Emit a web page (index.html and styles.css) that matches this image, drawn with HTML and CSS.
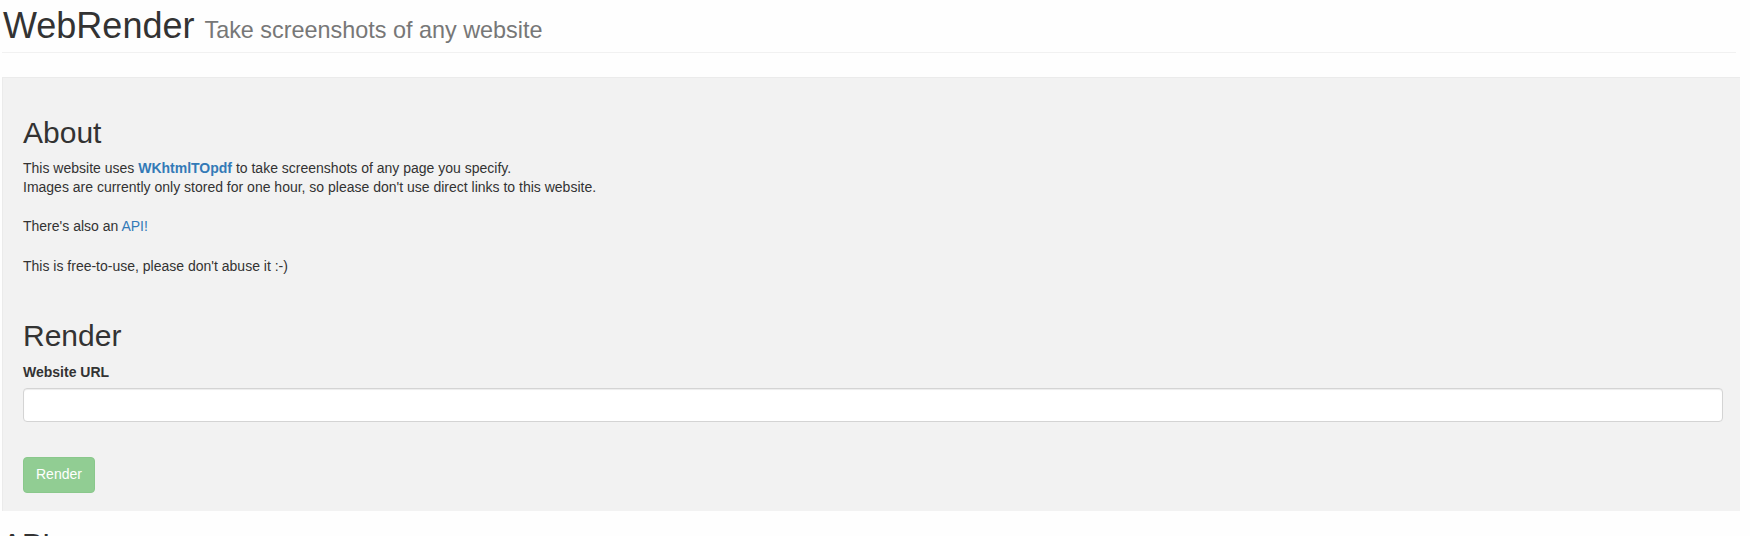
FILE: index.html
```html
<!DOCTYPE html>
<html lang="en">
<head>
<meta charset="utf-8">
<title>WebRender</title>
<link rel="stylesheet" href="styles.css">
</head>
<body>
<div class="page">
  <header class="page-header">
    <h1>WebRender <small>Take screenshots of any website</small></h1>
  </header>
  <main class="jumbotron">
    <h2 class="about-title">About</h2>
    <p class="about-text">This website uses <a class="link strong" href="#">WKhtmlTOpdf</a> to take screenshots of any page you specify.<br>Images are currently only stored for one hour, so please don't use direct links to this website.<br><br>There's also an <a class="link" href="#">API!</a><br><br>This is free-to-use, please don't abuse it :-)</p>
    <h2 class="render-title">Render</h2>
    <form class="render-form">
      <label class="label" for="url">Website URL</label>
      <input class="form-control" id="url" type="text">
      <button class="btn" type="button" disabled>Render</button>
    </form>
  </main>
  <h2 class="api-title">API</h2>
</div>
</body>
</html>
```
FILE: styles.css
```css
html, body {
  margin: 0;
  padding: 0;
  background: #fefefe;
  overflow: hidden;
}
body {
  font-family: "Liberation Sans", Arial, sans-serif;
  font-size: 14px;
  line-height: 19.6px;
  color: #333;
}
.page {
  width: 1738px;
  padding-left: 2px;
}
.page-header {
  padding: 0 0 6px 1px;
  border-bottom: 1px solid #f1f1f1;
  margin-bottom: 24px;
  margin-right: 4px;
}
h1 {
  margin: 6px 0 0;
  font-size: 36px;
  font-weight: 400;
  line-height: 39.6px;
  color: #333;
}
h1 small {
  font-size: 23.4px;
  line-height: 1;
  color: #777;
}
.jumbotron {
  background: #f2f2f2;
  border-top: 1px solid #ebebeb;
  border-left: 1px solid #ebebeb;
  padding: 0 17px 18.5px 20px;
  display: flex;
  flex-direction: column;
}
h2 {
  font-size: 30px;
  font-weight: 400;
  line-height: 33px;
  margin: 0;
  color: #333;
}
.about-title {
  margin-top: 38px;
  margin-bottom: 10px;
}
.about-text {
  margin: 0;
}
.link {
  color: #337ab7;
  text-decoration: none;
}
.strong {
  font-weight: 700;
}
.render-title {
  margin-top: 43px;
  margin-bottom: 11px;
}
.render-form {
  display: flex;
  flex-direction: column;
  align-items: flex-start;
}
.label {
  font-weight: 700;
  margin-bottom: 5px;
}
.form-control {
  box-sizing: border-box;
  width: 100%;
  height: 34px;
  margin: 0;
  padding: 6px 12px;
  background: #fff;
  border: 1px solid #d4d4d4;
  border-radius: 4px;
  box-shadow: inset 0 1px 1px rgba(0,0,0,.075);
  font: inherit;
}
.btn {
  margin-top: 35px;
  height: 36px;
  padding: 0 12px;
  background: #91cd93;
  border: 1px solid #8ac88c;
  border-radius: 4px;
  color: #fff;
  font: inherit;
}
.api-title {
  margin-top: 16px;
}
```
